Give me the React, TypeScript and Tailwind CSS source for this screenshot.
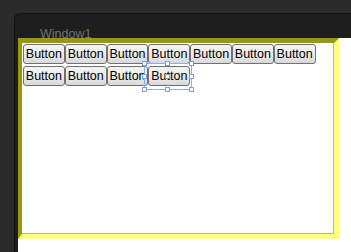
import React from "react";

function Btn({ selected = false }: { selected?: boolean }) {
  return (
    <div className="relative w-[41.8px] h-[20px] shrink-0">
      <div className="w-full h-full rounded-[3px] border border-[#707070] bg-gradient-to-b from-[#f3f3f3] via-[#ebebeb] to-[#d8d8d8] flex items-center justify-center text-[12.5px] leading-none text-black">
        Button
      </div>
      {selected && (
        <div className="absolute left-[-4px] top-[-3px] w-[48px] h-[27px] border border-[#8eb0ea] pointer-events-none">
          {[
            "left-[-3px] top-[-3px]",
            "left-[20px] top-[-3px]",
            "right-[-3px] top-[-3px]",
            "left-[-3px] top-[10px]",
            "left-[20px] top-[10px]",
            "right-[-3px] top-[10px]",
            "left-[-3px] bottom-[-3px]",
            "left-[20px] bottom-[-3px]",
            "right-[-3px] bottom-[-3px]",
          ].map((c, i) => (
            <div key={i} className={`absolute ${c} w-[5px] h-[5px] border border-[#7aa0e4] bg-white`} />
          ))}
        </div>
      )}
    </div>
  );
}

export default function App() {
  return (
    <div
      className="w-[351px] h-[252px] overflow-hidden bg-white flex flex-col"
      style={{ fontFamily: '"Liberation Sans", Arial, sans-serif' }}
    >
      {/* top chrome */}
      <div className="h-[38px] shrink-0 bg-[#2b2b2b] pt-[13px] pl-[14px]">
        <div className="h-full bg-[#1e1e1e] rounded-tl-[6px] border-l border-t border-[#141414] pl-[25px] pt-[14px] text-[12.5px] leading-none text-[#727272]">
          Window1
        </div>
      </div>
      <div className="flex flex-1 min-h-0">
        {/* left chrome */}
        <div className="w-[18px] shrink-0 flex">
          <div className="w-[14px] bg-[#2b2b2b]" />
          <div className="w-[4px] bg-[#1e1e1e] border-l border-[#141414]" />
        </div>
        <div className="flex flex-col">
          <div className="w-[321px] h-[201px] border-t-[5px] border-l-[4px] border-b-[5px] border-r-[5px] border-t-[#98980f] border-l-[#98980f] border-b-[#ffff7c] border-r-[#ffff7c]">
            <div className="w-full h-full bg-white border-r border-b border-[#a8c470] pl-[1px] pt-[1px] flex flex-col gap-[2px]">
              <div className="flex">
                <Btn />
                <Btn />
                <Btn />
                <Btn />
                <Btn />
                <Btn />
                <Btn />
              </div>
              <div className="flex">
                <Btn />
                <Btn />
                <Btn />
                <Btn selected />
              </div>
            </div>
          </div>
        </div>
      </div>
    </div>
  );
}
